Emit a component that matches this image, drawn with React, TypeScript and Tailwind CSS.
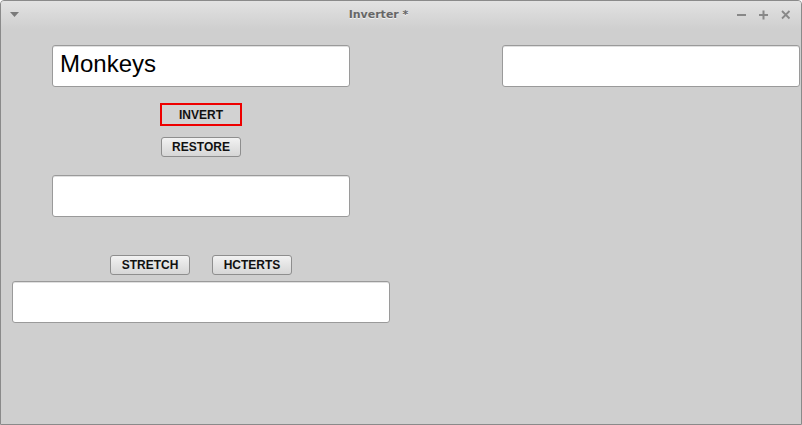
import React from "react";

function TextBox({ value, className }: { value?: string; className: string }) {
    return (
        <div
            className={`h-[42px] bg-white border border-[#9a9a9a] rounded-[3px] shadow-[inset_0_1px_0_#e0e0e0] flex items-center pl-[7px] pb-[4px] text-[24px] text-black font-['Liberation_Sans',Arial,sans-serif] ${className}`}
        >
            {value}
        </div>
    );
}

function Button({ label, className = "" }: { label: string; className?: string }) {
    return (
        <button
            className={`w-[80px] h-[20px] rounded-[3px] border border-[#8e8e8e] bg-gradient-to-b from-[#f2f2f2] to-[#d6d6d6] text-[12px] font-bold text-[#111] leading-none font-['Liberation_Sans',Arial,sans-serif] ${className}`}
        >
            {label}
        </button>
    );
}

export default function App() {
    return (
        <div className="w-[802px] h-[425px] bg-[#cfcfcf] border border-[#8a8a8a] rounded-t-[4px] flex flex-col overflow-hidden">
            {/* title bar */}
            <div className="h-[28px] shrink-0 flex items-center px-[9px] bg-gradient-to-b from-[#e2e2e2] to-[#cfcfcf]">
                <svg width="10" height="6" viewBox="0 0 10 6" className="mt-[-1px]">
                    <path d="M0 0 H9 L4.5 5 Z" fill="#7a7a7a" />
                </svg>
                <div className="flex-1 text-center text-[11px] font-bold text-[#666] font-['DejaVu_Sans',sans-serif] [text-shadow:0_1px_0_#f0f0f0]">
                    Inverter *
                </div>
                <div className="flex items-center gap-[12px] pr-[1px]">
                    <svg width="10" height="10" viewBox="0 0 10 10">
                        <rect x="0" y="4" width="9" height="2" fill="#888" />
                    </svg>
                    <svg width="10" height="10" viewBox="0 0 10 10">
                        <rect x="0" y="4" width="9" height="2" fill="#888" />
                        <rect x="3.5" y="0.5" width="2" height="9" fill="#888" />
                    </svg>
                    <svg width="10" height="10" viewBox="0 0 10 10">
                        <path d="M1 1 L8.5 8.5 M8.5 1 L1 8.5" stroke="#888" strokeWidth="1.8" />
                    </svg>
                </div>
            </div>

            {/* body */}
            <div className="flex flex-1">
                <div className="w-[400px] flex flex-col items-center pt-[16px]">
                    <TextBox value="Monkeys" className="w-[298px]" />
                    <button className="mt-[16px] w-[82px] h-[23px] border-2 border-[#ee0000] bg-[#d2d2d2] text-[12px] font-bold text-[#111] leading-none font-['Liberation_Sans',Arial,sans-serif]">
                        INVERT
                    </button>
                    <Button label="RESTORE" className="mt-[11px]" />
                    <TextBox className="w-[298px] mt-[18px]" />
                    <div className="flex gap-[22px] mt-[38px]">
                        <Button label="STRETCH" />
                        <Button label="HCTERTS" />
                    </div>
                    <TextBox className="w-[378px] mt-[6px]" />
                </div>
                <div className="flex-1 pt-[16px] pl-[101px]">
                    <TextBox className="w-[298px]" />
                </div>
            </div>
        </div>
    );
}
